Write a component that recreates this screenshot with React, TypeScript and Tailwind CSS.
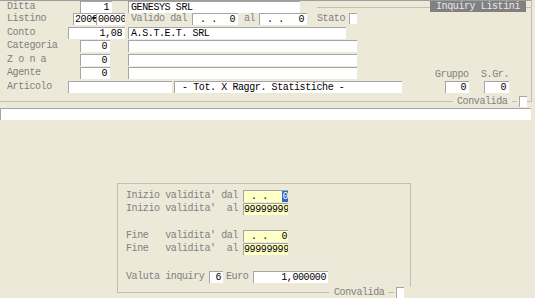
import type { ReactNode } from 'react';

type FieldProps = {
  className?: string;
  right?: boolean;
  yellow?: boolean;
  children?: ReactNode;
};

function Field({ className = '', right, yellow, children }: FieldProps) {
  return (
    <div
      className={`h-[12px] shrink-0 overflow-hidden whitespace-pre border-l border-t border-[#a5a5a5] leading-[11px] text-black ${
        yellow ? 'bg-[#ffffc8]' : 'bg-white'
      } ${right ? 'text-right pr-[3px]' : 'pl-[2px]'} ${className}`}
    >
      {children}
    </div>
  );
}

function Label({ className = '', children }: { className?: string; children: ReactNode }) {
  return <div className={`shrink-0 whitespace-pre leading-[12px] text-[#808080] ${className}`}>{children}</div>;
}

function DateValue({ sel }: { sel?: boolean }) {
  return (
    <div className="flex justify-between">
      <span className="pl-[7px]">. .</span>
      {sel ? <span className="bg-[#316ac5] text-white">0</span> : <span>0</span>}
    </div>
  );
}

function Check() {
  return <div className="h-[11px] w-[8px] shrink-0 border-l border-t border-[#a5a5a5] bg-white" />;
}

export default function App() {
  return (
    <div className="h-[298px] w-[535px] overflow-hidden bg-[#ece9d8] [font-family:'Liberation_Mono','Courier_New',monospace] text-[10px] tracking-[-0.4px]">
      {/* testata */}
      <div className="relative h-[102px] w-[532px] border-b border-r border-t border-b-[#c2bfaf] border-r-[#c2bfaf] border-t-[#9d9d9d]">
        <div className="flex h-[12px] items-start">
          <Label className="w-[80px] pl-[7px]">Ditta</Label>
          <Field right className="w-[32px]">1</Field>
          <Field className="ml-[16px] w-[172px]">GENESYS SRL</Field>
          <div className="w-[130px] shrink-0 pl-[17px]">
            <div className="h-[7px] border-b border-[#c2bfaf]" />
          </div>
          <div className="h-[11px] w-[96px] shrink-0 bg-[#808080] text-center leading-[11px] text-[#e8e8e8]">Inquiry Listini</div>
          <div className="h-[7px] flex-1 border-b border-[#c2bfaf]" />
        </div>

        <div className="flex h-[14px] items-start">
          <Label className="w-[73px] pl-[7px]">Listino</Label>
          <Field className="w-[23px] !overflow-visible !pl-[1px]">200€</Field>
          <Field className="w-[29px] !pl-px">00000</Field>
          <Label className="ml-[6px] w-[61px]">Valido dal</Label>
          <Field right className="w-[46px]"><DateValue /></Field>
          <Label className="ml-[6px] w-[15px]">al</Label>
          <Field right className="w-[48px]"><DateValue /></Field>
          <Label className="ml-[10px] w-[32px]">Stato</Label>
          <Check />
        </div>

        <div className="flex h-[13px] items-start">
          <Label className="w-[68px] pl-[7px]">Conto</Label>
          <Field right className="w-[57px]">1,08</Field>
          <Field className="ml-[3px] w-[218px]">A.S.T.E.T. SRL</Field>
        </div>

        <div className="flex h-[14px] items-start">
          <Label className="w-[80px] pl-[7px]">Categoria</Label>
          <Field right className="w-[30px]">0</Field>
          <Field className="ml-[18px] w-[229px]" />
        </div>

        <div className="flex h-[13px] items-start">
          <Label className="w-[80px] pl-[7px]">Z o n a</Label>
          <Field right className="w-[30px]">0</Field>
          <Field className="ml-[18px] w-[229px]" />
        </div>

        <div className="flex h-[14px] items-start">
          <Label className="w-[80px] pl-[7px]">Agente</Label>
          <Field right className="w-[30px]">0</Field>
          <Field className="ml-[18px] w-[229px]" />
          <Label className="ml-[78px] w-[46px] pt-[2px]">Gruppo</Label>
          <Label className="pt-[2px]">S.Gr.</Label>
        </div>

        <div className="flex h-[13px] items-start">
          <Label className="w-[68px] pl-[7px]">Articolo</Label>
          <Field className="w-[104px]" />
          <Field className="ml-[2px] w-[228px] !pl-[7px]">- Tot. X Raggr. Statistiche -</Field>
          <Field right className="ml-[43px] w-[24px]">0</Field>
          <Field right className="ml-[15px] w-[25px]">0</Field>
        </div>

        <div className="absolute bottom-[-6px] left-[453px] flex h-[11px] w-[74px] items-center bg-[#ece9d8] pl-[4px]">
          <Label className="w-[55px] leading-[11px]">Convalida</Label>
          <div className="h-px w-[5px] bg-[#c2bfaf]" />
          <div className="ml-[2px]"><Check /></div>
        </div>
      </div>

      <Field className="mt-[6px] w-[531px]" />

      {/* selezione validita' */}
      <div className="relative ml-[117px] mt-[63px] h-[110px] w-[294px] border border-[#c2bfaf] pl-[8px] pt-[6px]">
        <div className="flex h-[13px] items-start">
          <Label className="w-[117px]">Inizio validita' dal</Label>
          <Field yellow right className="w-[45px] !pr-0"><DateValue sel /></Field>
        </div>
        <div className="flex h-[13px] items-start">
          <Label className="w-[117px]">Inizio validita'  al</Label>
          <Field yellow right className="w-[45px] !pr-0">99999999</Field>
        </div>
        <div className="mt-[14px] flex h-[13px] items-start">
          <Label className="w-[117px]">Fine   validita' dal</Label>
          <Field yellow right className="w-[45px] !pr-[1px]"><DateValue /></Field>
        </div>
        <div className="flex h-[13px] items-start">
          <Label className="w-[117px]">Fine   validita'  al</Label>
          <Field yellow right className="w-[45px] !pr-0">99999999</Field>
        </div>
        <div className="mt-[15px] flex h-[13px] items-start">
          <Label className="w-[83px]">Valuta inquiry</Label>
          <Field right className="w-[14px] !pr-[2px]">6</Field>
          <Label className="ml-[3px] w-[27px]">Euro</Label>
          <Field right className="w-[75px] !pr-[2px]">1,000000</Field>
        </div>

        <div className="absolute bottom-[-6px] left-[211px] flex h-[11px] w-[82px] items-center bg-[#ece9d8] pl-[5px]">
          <Label className="w-[54px] leading-[11px]">Convalida</Label>
          <div className="h-px w-[6px] bg-[#c2bfaf]" />
          <div className="ml-[2px]"><Check /></div>
        </div>
      </div>
    </div>
  );
}
